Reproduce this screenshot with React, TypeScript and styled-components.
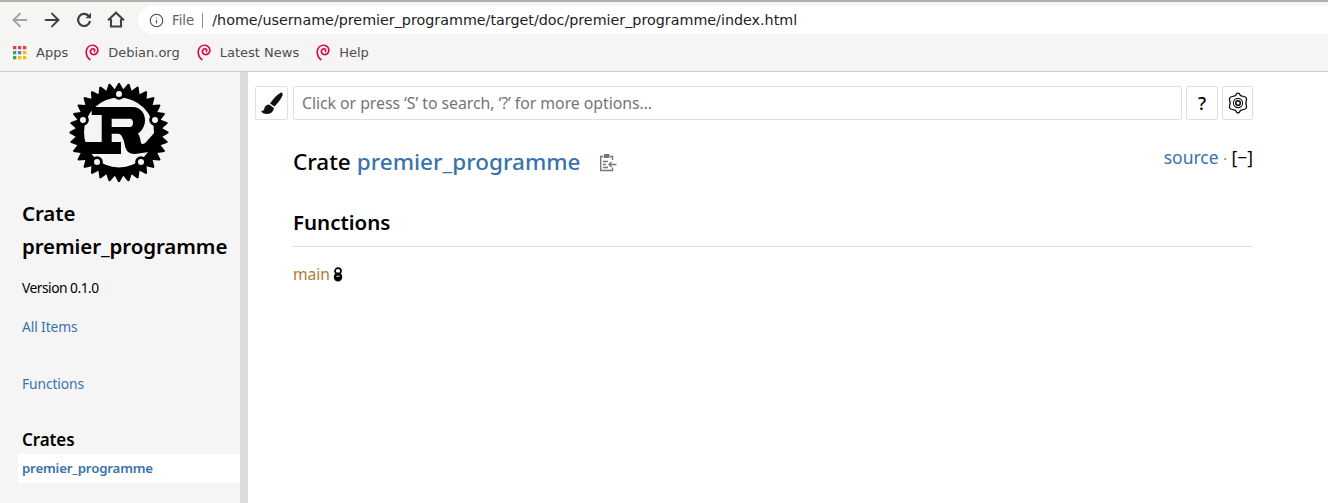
import React from "react";
import styled, { createGlobalStyle } from "styled-components";
import { ArrowLeft, ArrowRight, Info } from "lucide-react";

const Global = createGlobalStyle`
  html, body { margin: 0; padding: 0; background: #fff; overflow: hidden; }
  * { box-sizing: border-box; }
`;
const BODY = `"Noto Sans", "Open Sans", sans-serif`;
const Page = styled.div`width: 1328px; height: 503px; display: flex; flex-direction: column; overflow: hidden;`;
const Chrome = styled.header`
  height: 72px; background: #f6f5f3; border-top: 2px solid #b3b0ab; border-bottom: 1px solid #cfccc8;
  font-family: "DejaVu Sans", sans-serif; flex: none;
`;
const Toolbar = styled.div`display: flex; align-items: center; height: 36px; padding-left: 4px;`;
const NavButton = styled.span<{ $muted?: boolean }>`
  width: 32px; display: flex; justify-content: center; color: ${p => (p.$muted ? "#a3a3a3" : "#3c4043")};
`;
const Omnibox = styled.div`
  margin-left: 6px; flex: 1; height: 28px; background: #fff; border-radius: 14px 0 0 14px;
  display: flex; align-items: center; padding-left: 11px; font-size: 14.3px; color: #202124;
`;
const Chip = styled.span`color: #5f6368; margin-left: 8px; padding-right: 8px; border-right: 1px solid #8d8d8d; line-height: 15px; font-size: 13.3px;`;
const Url = styled.span`margin-left: 9px;`;
const Bookmarks = styled.div`display: flex; align-items: center; height: 29px; padding-left: 13px; font-size: 13px; color: #4a4d50;`;
const Bookmark = styled.span`display: flex; align-items: center; margin-right: 17px; gap: 9px;`;
const Body = styled.div`flex: 1; display: flex; min-height: 0;`;
const Sidebar = styled.aside`
  width: 248px; flex: none; background: #f5f5f5; border-right: 8px solid #dcdcdc; padding-top: 10px;
  font-family: ${BODY}; color: #000;
`;
const LogoWrap = styled.div`display: flex; justify-content: center; margin-left: -2px;`;
const SideTitle = styled.h2`margin: 15px 0 0 22px; font-size: 20.5px; line-height: 33px; font-weight: 600; letter-spacing: -.1px;`;
const Version = styled.p`margin: 16px 0 0 22px; font-size: 13.8px; line-height: 18px; letter-spacing: -.5px;`;
const SideLink = styled.a<{ $gap: number }>`display: block; margin: ${p => p.$gap}px 0 0 22px; font-size: 13.8px; line-height: 18px; color: #3873ad; letter-spacing: -.1px;`;
const CratesTitle = styled.h3`margin: 35px 0 0 22px; font-size: 17px; line-height: 24px; font-weight: 600; letter-spacing: -.1px;`;
const Current = styled.div`margin: 2px 0 0 18px; padding-left: 4px; height: 29px; line-height: 28px; background: #fff; color: #3873ad; font-size: 13.3px; font-weight: 600; letter-spacing: -.2px;`;
const Main = styled.main`flex: 1; padding: 14px 75px 0 7px; font-family: ${BODY}; color: #000;`;
const SearchRow = styled.div`display: flex; align-items: stretch; height: 34px;`;
const IconBox = styled.div<{ $w: number; $ml: number }>`
  width: ${p => p.$w}px; margin-left: ${p => p.$ml}px; flex: none; border: 1px solid #e0e0e0; border-radius: 2px; background: #fff;
  display: flex; align-items: center; justify-content: center; font-size: 18px; font-weight: 500;
`;
const Search = styled.div`
  flex: 1; margin-left: 5px; border: 1px solid #e0e0e0; border-radius: 2px; display: flex; align-items: center;
  padding-left: 8px; color: #757575; font-size: 15.85px; letter-spacing: -.05px;
`;
const Content = styled.div`padding-left: 38px;`;
const TitleRow = styled.div`display: flex; align-items: flex-start; justify-content: space-between; margin-top: 25px; height: 40px;`;
const Title = styled.h1`margin: 0; font-size: 22.5px; line-height: 34px; font-weight: 500; display: flex; align-items: center;`;
const Blue = styled.a`color: #3873ad; margin-left: 6px;`;
const Source = styled.a`color: #3873ad;`;
const Clip = styled.span`display: flex; margin-left: 19px; color: #777;`;
const Out = styled.div`font-size: 17.5px; line-height: 24px; white-space: pre;`;
const Dot = styled.span`color: #777; font-size: 14px;`;
const Section = styled.h2`
  margin: 23px 0 0; font-size: 20.5px; line-height: 29px; height: 39px; font-weight: 600; border-bottom: 1px solid #ddd;
`;
const Item = styled.div`margin-top: 17px; font-size: 15.6px; line-height: 21px; display: flex; align-items: center; gap: 3px;`;
const Fn = styled.a`color: #ad7c37;`;

const Grid = () => {
  const cols = ["#ea4335", "#fbbc04", "#34a853", "#4285f4"];
  const cells = [0, 0, 0, 2, 3, 1, 2, 1, 1];
  return (
    <svg width="14" height="14" viewBox="0 0 14 14">
      {cells.map((c, i) => <rect key={i} x={(i % 3) * 5} y={Math.floor(i / 3) * 5} width="3.3" height="3.3" fill={cols[c]} />)}
    </svg>
  );
};
const Swirl = () => (
  <svg width="14" height="17" viewBox="0 0 16 19" fill="none" stroke="#d70a53" strokeWidth="1.9" strokeLinecap="round">
    <path d="M5.5 17.5C2.5 15 1 11 1.5 7.5 2.3 3.5 5.5 1 9 1.2c3.5.2 6 3 5.7 6.2-.3 3-3 5-5.6 4.4-2.2-.5-3.4-2.6-2.7-4.6.6-1.6 2.4-2.4 3.8-1.6 1 .6 1.2 1.9.5 2.7" />
  </svg>
);
const Reload = () => (
  <svg width="18" height="18" viewBox="0 0 18 18" fill="none" stroke="currentColor" strokeWidth="2.2">
    <path d="M13.6 5A6 6 0 1 0 15 10" />
    <path d="M10.5 7.2H16V1.7Z" fill="currentColor" stroke="none" />
  </svg>
);
const HomeIcon = () => (
  <svg width="18" height="18" viewBox="0 0 18 18" fill="none" stroke="currentColor" strokeWidth="2.1">
    <path d="M4 8V15.5H14V8" />
    <path d="M1 9.2L9 1.8 17 9.2" />
  </svg>
);
const Logo = () => {
  const teeth: string[] = [];
  const n = 32;
  for (let i = 0; i < n; i++) {
    const a = (i / n) * Math.PI * 2 - Math.PI / 2;
    const d = Math.PI / n;
    const p = (r: number, t: number) => `${(50 + r * Math.cos(t)).toFixed(2)},${(50.5 + r * Math.sin(t)).toFixed(2)}`;
    teeth.push(p(49.5, a - d * 0.15), p(49.5, a + d * 0.15), p(43.5, a + d));
  }
  const holes = [[50, 12], [86, 38], [14, 38], [28, 80], [72, 80]];
  return (
    <svg width="100" height="100" viewBox="0 0 100 100">
      <polygon points={teeth.join(" ")} fill="#000" />
      <circle cx="50" cy="50.5" r="35" fill="#f5f5f5" />
      <path d="M22.7 25H64C71 25 76 31 76 38C76 44 73 49 69 51.7C71 54 71.5 58 72 61C73 63 76 62 78 59L86 50L88 60L80 70L66 72C60 72 57 69 56 64C55 58 53 51.7 49 51.7H42.7V60H52V72H21L13 71V60H32.7V33H22.7Z" fill="#000" />
      <path d="M42.7 36.7H61C63 36.7 64 38.5 64 40.7C64 43 63 45 61 45H42.7Z" fill="#f5f5f5" />
      {holes.map(([x, y]) => (
        <g key={`${x}-${y}`}>
          <circle cx={x} cy={y} r="5.8" fill="#000" />
          <circle cx={x} cy={y} r="3" fill="#f5f5f5" />
        </g>
      ))}
    </svg>
  );
};
const Brush = () => (
  <svg width="22" height="22" viewBox="0 0 22 22" fill="#111">
    <path d="M20 .5C21.5.5 22 2 21.5 3.5 20 7 17 11 13.5 14.5L9 11.5C12 7 16 2.5 20 .5Z" />
    <path d="M8 12.5L13 16C12.5 19 10 22 6 22 3 22 1 21 0 19 2 19.5 3 18 3.5 16 4 14 6 12.5 8 12.5Z" />
  </svg>
);
const Gear = () => (
  <svg width="20" height="22" viewBox="0 0 20 22" fill="none" stroke="#111" strokeWidth="1.3" strokeLinejoin="round">
    <path d="M8.7 1.6C9.5 1.1 10.5 1.1 11.3 1.6L12.5 3.6 17.3 5C18.1 5.5 18.6 6.3 18.6 7.2L17.8 11 18.6 14.8C18.6 15.7 18.1 16.5 17.3 17L12.5 18.4 11.3 20.4C10.5 20.9 9.5 20.9 8.7 20.4L7.5 18.4 2.7 17C1.9 16.5 1.4 15.7 1.4 14.8L2.2 11 1.4 7.2C1.4 6.3 1.9 5.5 2.7 5L7.5 3.6Z" />
    <circle cx="10" cy="11" r="4.6" strokeWidth="1.1" />
    <circle cx="10" cy="11" r="2.3" strokeWidth="1.6" />
  </svg>
);
const Clipboard = () => (
  <svg width="18" height="19" viewBox="0 0 18 19" fill="none" stroke="#777" strokeWidth="1.4">
    <path d="M13.5 7V3.5H11M4.5 3.5H1.7V17.5H13.5V14.5" />
    <path d="M5 1H10.5V5H5Z" fill="#777" stroke="none" />
    <path d="M4 8.5H9M4 11.5H7M4 14.5H9M17.5 11.5H10M12.5 9L10 11.5 12.5 14" />
  </svg>
);
const Lock = () => (
  <svg width="10" height="15" viewBox="0 0 10 15" fill="none" stroke="#000" strokeWidth="1.7">
    <ellipse cx="5" cy="4" rx="3" ry="2.8" />
    <ellipse cx="5" cy="10" rx="3.4" ry="3.6" fill="#000" />
    <path d="M3.5 9.2H6.5" stroke="#fff" strokeWidth="1" />
  </svg>
);

export default function App() {
  return (
    <Page>
      <Global />
      <Chrome>
        <Toolbar>
          <NavButton $muted><ArrowLeft size={22} strokeWidth={2.1} /></NavButton>
          <NavButton><ArrowRight size={22} strokeWidth={2.1} /></NavButton>
          <NavButton><Reload /></NavButton>
          <NavButton><HomeIcon /></NavButton>
          <Omnibox>
            <Info size={15} strokeWidth={1.8} color="#4a4d50" />
            <Chip>File</Chip>
            <Url>/home/username/premier_programme/target/doc/premier_programme/index.html</Url>
          </Omnibox>
        </Toolbar>
        <Bookmarks>
          <Bookmark><Grid />Apps</Bookmark>
          <Bookmark><Swirl />Debian.org</Bookmark>
          <Bookmark><Swirl />Latest News</Bookmark>
          <Bookmark><Swirl />Help</Bookmark>
        </Bookmarks>
      </Chrome>
      <Body>
        <Sidebar>
          <LogoWrap><Logo /></LogoWrap>
          <SideTitle>Crate<br />premier_programme</SideTitle>
          <Version>Version 0.1.0</Version>
          <SideLink $gap={21}>All Items</SideLink>
          <SideLink $gap={39}>Functions</SideLink>
          <CratesTitle>Crates</CratesTitle>
          <Current>premier_programme</Current>
        </Sidebar>
        <Main>
          <SearchRow>
            <IconBox $w={33} $ml={0}><Brush /></IconBox>
            <Search>Click or press ‘S’ to search, ‘?’ for more options…</Search>
            <IconBox $w={32} $ml={4}>?</IconBox>
            <IconBox $w={31} $ml={4}><Gear /></IconBox>
          </SearchRow>
          <Content>
            <TitleRow>
              <Title>Crate<Blue>premier_programme</Blue><Clip><Clipboard /></Clip></Title>
              <Out><Source>source</Source> <Dot>·</Dot> [−]</Out>
            </TitleRow>
            <Section>Functions</Section>
            <Item><Fn>main</Fn><Lock /></Item>
          </Content>
        </Main>
      </Body>
    </Page>
  );
}
